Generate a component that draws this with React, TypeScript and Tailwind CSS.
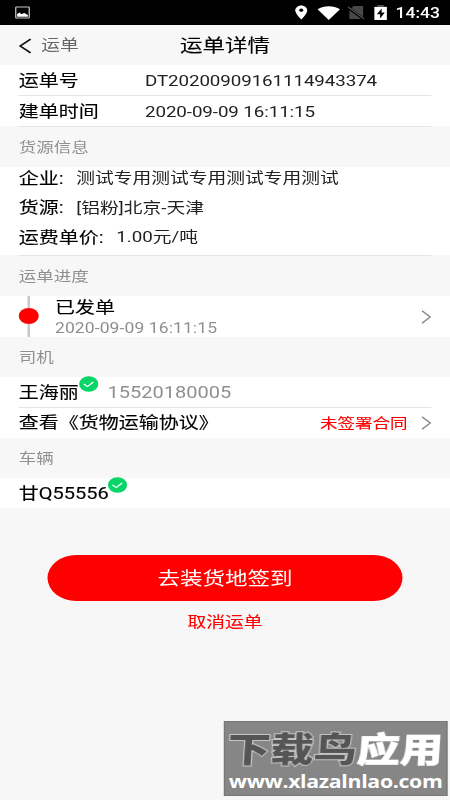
import type { ReactNode } from "react";
import clsx from "clsx";

function StatusBar() {
  return (
    <div className="flex h-[25px] items-center bg-black pr-2 pl-3">
      <svg className="h-[13px] w-3" viewBox="0 0 12 13" fill="none">
        <rect x="0.6" y="1" width="10.8" height="11" rx="0.5" stroke="#c8c8c8" />
        <path d="M1.7 10.7V8l2-1.4L5 8.2l2.4-1.3 2.9 2v1.800z" fill="#fff" />
      </svg>
      <div className="ml-auto flex items-center">
        <svg className="h-[15px] w-[10px]" viewBox="0 0 10 15">
          <path
            d="M5 .5C2.400.5.2 2.700.2 5.300.2 8.900 5 14.500 5 14.500s4.800-5.600 4.800-9.200C9.800 2.700 7.600.5 5 .5z"
            fill="#fff"
          />
          <circle cx="5" cy="5.200" r="1.600" fill="#000" />
        </svg>
        <svg className="ml-2 h-[14px] w-[18px]" viewBox="0 0 18 14">
          <path d="M0 3.200C5.200-.9 12.800-.9 18 3.200L9 14z" fill="#fff" />
        </svg>
        <svg className="ml-[6px] h-[15px] w-[14px]" viewBox="0 0 14 15">
          <path d="M5 1h7.500v13H1.500V5z" fill="#484848" />
          <path d="M0 2.200l13 12" stroke="#000" strokeWidth="2.400" />
          <path d="M.3 1.800l13 12" stroke="#555" strokeWidth="1.100" />
        </svg>
        <svg className="ml-[7px] h-[15px] w-[11px]" viewBox="0 0 11 15">
          <path d="M3 0h5v1.500h2.500V4H.5V1.500H3z" fill="#555" />
          <path d="M.5 2h10v13H.5z" fill="#fff" />
          <path d="M6.300 3.500L2.500 9.200h2.600v4.300l3.700-6H6.300z" fill="#000" />
        </svg>
        <span className="ml-1.5 pt-0.5 text-sm leading-[25px] font-medium text-white">14:43</span>
      </div>
    </div>
  );
}

function Header() {
  return (
    <div className="grid h-10 grid-cols-3 items-center pt-px pr-[15px] pl-[15px]">
      <div className="flex items-center gap-[7px] text-[15px] text-[#666]">
        <svg className="h-4 w-[11px]" viewBox="0 0 11 16" fill="none">
          <path d="M9.500 1.200L1.200 8l8.300 6.800" stroke="#111" strokeWidth="1.500" />
        </svg>
        运单
      </div>
      <h1 className="text-center text-lg text-black [-webkit-text-stroke:0.12px_#000]">运单详情</h1>
    </div>
  );
}

function SectionTitle({ children, className }: { children: ReactNode; className?: string }) {
  return (
    <h2 className={clsx("flex items-center pl-[15px] text-sm text-[#8f8f8f]", className)}>
      {children}
    </h2>
  );
}

function Label({ children, className }: { children: ReactNode; className?: string }) {
  return (
    <span className={clsx("text-base text-black [-webkit-text-stroke:0.12px_#000]", className)}>
      {children}
    </span>
  );
}

function Divider() {
  return <div className="mx-[15px] h-px bg-[#e5e5e5]" />;
}

function Arrow() {
  return (
    <svg className="h-[14px] w-2" viewBox="0 0 8 14" fill="none">
      <path d="M.6.8L7.200 7 .6 13.200" stroke="#888" strokeWidth="1.200" />
    </svg>
  );
}

function Verified() {
  return (
    <svg className="-mt-[17px] -ml-[0.5px] h-4 w-4" viewBox="0 0 16 16" fill="none">
      <circle cx="8" cy="8" r="7.700" fill="#07d568" />
      <path d="M4 8l3 2.600L11.700 6" stroke="#fff" strokeWidth="1.100" />
    </svg>
  );
}

function InfoLine({ label, value }: { label: string; value: string }) {
  return (
    <div className="flex h-[29.500px] items-center">
      <Label>{label}</Label>
      <Label className="w-[14px]">:</Label>
      <span className="text-[15px] text-[#222]">{value}</span>
    </div>
  );
}

function Watermark() {
  return (
    <div className="absolute top-[721px] left-[179px] h-[75px] w-[179px] border border-[#777] bg-[#868686] font-black whitespace-nowrap">
      <div className="mt-[7px] ml-[2px] flex -skew-x-3 text-[34.500px] leading-[42px]">
        <span className="text-[#555] [-webkit-text-stroke:2px_#c4c4c4] [paint-order:stroke_fill]">
          下载鸟
        </span>
        <span className="text-white [-webkit-text-stroke:0.5px_#fff]">应用</span>
      </div>
      <div className="mt-px ml-[3px] font-['Open_Sans'] text-[17px] leading-5 font-bold tracking-[-0.250px] text-white">
        www.xlazalnlao.com
      </div>
    </div>
  );
}

export default function App() {
  return (
    <div className="h-[800px] w-[450px] overflow-hidden bg-[#f7f7f7]">
      <div className="relative flex h-[800px] w-[360px] origin-left scale-x-125 flex-col font-['Roboto','Noto_Sans_CJK_SC',sans-serif] leading-none">
        <StatusBar />
        <Header />

        <div className="bg-white text-[15px] text-[#222]">
          <div className="flex h-[30px] items-center pt-px pl-[15px]">
            <Label className="w-[101px]">运单号</Label>
            <span className="pt-px tracking-[-0.070px]">DT20200909161114943374</span>
          </div>
          <Divider />
          <div className="flex h-[30px] items-center pt-px pl-[15px]">
            <Label className="w-[101px]">建单时间</Label>
            <span className="pt-px tracking-[-0.070px]">2020-09-09 16:11:15</span>
          </div>
        </div>
        <Divider />

        <SectionTitle className="h-10">货源信息</SectionTitle>
        <div className="h-[88px] bg-white pl-[15px]">
          <div className="-mt-[3px]">
            <InfoLine label="企业" value="测试专用测试专用测试专用测试" />
            <InfoLine label="货源" value="[铝粉]北京-天津" />
            <InfoLine label="运费单价" value="1.00元/吨" />
          </div>
        </div>
        <Divider />

        <SectionTitle className="h-10">运单进度</SectionTitle>
        <div className="flex h-[41px] items-center bg-white pr-[15px] pl-[15px]">
          <div className="flex h-full w-4 flex-col items-center">
            <div className="h-3 w-[2px] bg-[#c8c8c8]" />
            <div className="size-4 rounded-full bg-[#f00]" />
            <div className="w-[2px] flex-1 bg-[#c8c8c8]" />
          </div>
          <div className="ml-[13px] flex-1 pt-0.5">
            <Label className="block leading-[21px]">已发单</Label>
            <div className="text-sm leading-5 tracking-[0.080px] text-[#8f8f8f]">
              2020-09-09 16:11:15
            </div>
          </div>
          <Arrow />
        </div>

        <SectionTitle className="h-10">司机</SectionTitle>
        <div className="bg-white">
          <div className="flex h-[30px] items-center pt-px pl-[15px]">
            <Label>王海丽</Label>
            <Verified />
            <span className="ml-[7.500px] text-base text-[#8f8f8f]">15520180005</span>
          </div>
          <Divider />
          <div className="flex h-[30px] items-center px-[15px]">
            <Label>查看《货物运输协议》</Label>
            <span className="mr-[11px] ml-auto text-sm text-[#f00] [-webkit-text-stroke:0.1px_#f00]">
              未签署合同
            </span>
            <Arrow />
          </div>
        </div>

        <SectionTitle className="h-10">车辆</SectionTitle>
        <div className="flex h-[30px] items-center bg-white pt-px pl-[15px]">
          <Label>甘Q55556</Label>
          <Verified />
        </div>

        <button className="mx-auto mt-[47px] h-[46px] w-[284px] rounded-full bg-[#f00] pt-px text-lg text-white">
          去装货地签到
        </button>
        <button className="mx-auto mt-[11px] h-5 text-[15px] text-[#f00] [-webkit-text-stroke:0.1px_#f00]">
          取消运单
        </button>

        <Watermark />
      </div>
    </div>
  );
}
